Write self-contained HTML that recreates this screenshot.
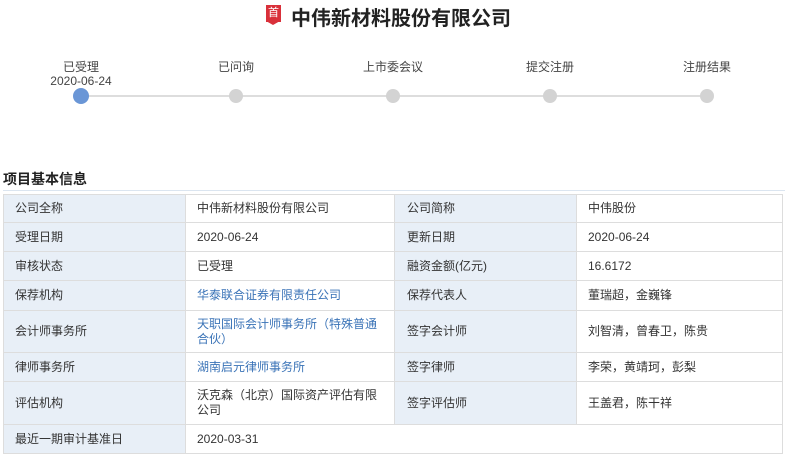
<!DOCTYPE html><html><head><meta charset="utf-8"><style>
body{margin:0;width:789px;height:456px;background:#fff;font-family:"Liberation Sans","Noto Sans CJK SC",sans-serif;color:#333;position:relative;overflow:hidden}
.a{position:absolute}
.t{position:absolute;font-size:16px;font-weight:bold;left:291px;top:2px;color:#222;font-size:20px}
.lab{position:absolute;font-size:12px;color:#444;transform:translateX(-50%);white-space:nowrap}
.dot{position:absolute;width:14px;height:14px;border-radius:50%;background:#d3d3d3;top:89px}
.c{position:absolute;box-sizing:border-box;border-right:1px solid #ddd;border-bottom:1px solid #ddd;font-size:12px;display:flex;align-items:center;padding-left:11px;line-height:15px;color:#333}
.l{background:#e8eff7}
.b{color:#3a73b7}
</style></head><body>
<div class="a" style="left:266px;top:5px;width:15px;height:17px;background:#d9303a;color:#fff;font-size:11px;text-align:center;line-height:16px">首</div>
<div class="a" style="left:266px;top:21px;width:0;height:0;border-left:7.5px solid transparent;border-right:7.5px solid transparent;border-top:4px solid #d9303a"></div>
<div class="t">中伟新材料股份有限公司</div>
<div class="a" style="left:81px;top:95px;width:626px;height:2px;background:#ddd"></div>
<div class="lab" style="left:81px;top:58px">已受理</div>
<div class="lab" style="left:81px;top:74px">2020-06-24</div>
<div class="lab" style="left:236px;top:58px">已问询</div>
<div class="lab" style="left:393px;top:58px">上市委会议</div>
<div class="lab" style="left:550px;top:58px">提交注册</div>
<div class="lab" style="left:707px;top:58px">注册结果</div>
<div class="dot" style="left:73px;top:88px;width:16px;height:16px;background:#6a96d6"></div>
<div class="dot" style="left:229px"></div>
<div class="dot" style="left:386px"></div>
<div class="dot" style="left:543px"></div>
<div class="dot" style="left:700px"></div>
<div class="a" style="left:3px;top:169px;font-size:14px;font-weight:bold;color:#222">项目基本信息</div>
<div class="a" style="left:3px;top:190px;width:782px;height:1px;background:#dbe5f0"></div>
<div class="a" style="left:3px;top:194px;width:780px;height:260px;border-left:1px solid #ddd;border-top:1px solid #ddd;box-sizing:border-box"></div>
<div id="g"></div>
<script>
var rows=[194,223,252,281,311,353,382,425,454],cols=[3,186,395,577,783];
var d=[["公司全称","中伟新材料股份有限公司","公司简称","中伟股份"],
["受理日期","2020-06-24","更新日期","2020-06-24"],
["审核状态","已受理","融资金额(亿元)","16.6172"],
["保荐机构","<span class=b>华泰联合证券有限责任公司</span>","保荐代表人","董瑞超，金巍锋"],
["会计师事务所","<span class=b>天职国际会计师事务所（特殊普通合伙）</span>","签字会计师","刘智清，曾春卫，陈贵"],
["律师事务所","<span class=b>湖南启元律师事务所</span>","签字律师","李荣，黄靖珂，彭梨"],
["评估机构","沃克森（北京）国际资产评估有限公司","签字评估师","王盖君，陈干祥"],
["最近一期审计基准日","2020-03-31"]];
var h="";
for(var r=0;r<8;r++){for(var c=0;c<d[r].length;c++){var x=cols[c],w=(r==7&&c==1?cols[4]:cols[c+1])-x;
h+='<div class="c'+(c%2==0?' l':'')+'" style="left:'+(x+(c==0?1:0))+'px;top:'+(rows[r]+(r==0?1:0))+'px;width:'+(w-(c==0?1:0))+'px;height:'+(rows[r+1]-rows[r]-(r==0?1:0))+'px;padding-right:'+(c%2?14:0)+'px">'+(c%2==0?'<span style="padding-left:'+(c==0?0:1)+'px">'+d[r][c]+'</span>':'<span>'+d[r][c]+'</span>')+'</div>';}}
document.getElementById('g').innerHTML=h;
</script>
</body></html>
